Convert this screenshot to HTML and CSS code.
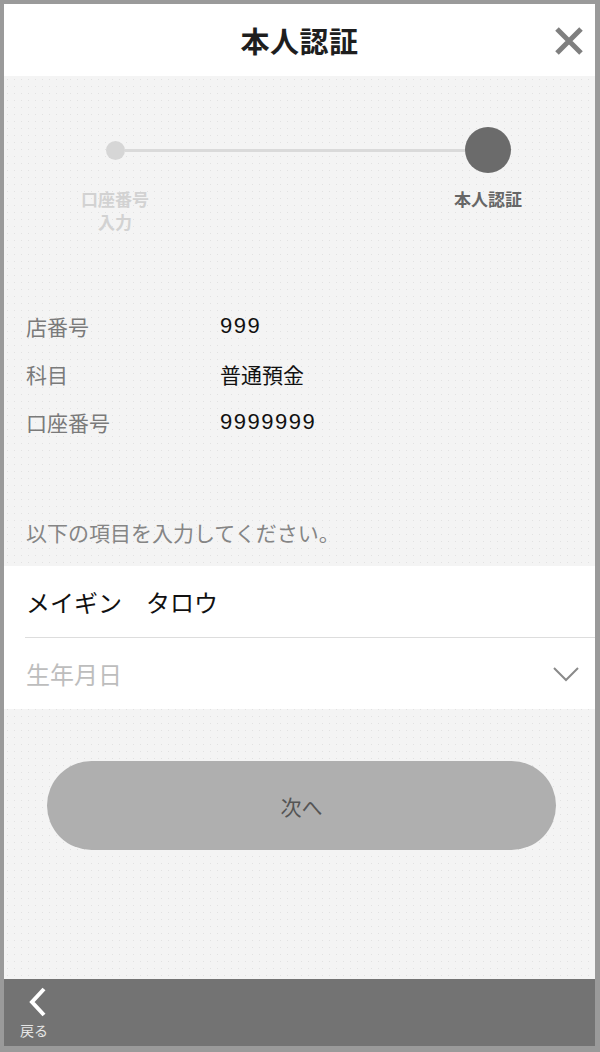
FILE: index.html
```html
<!DOCTYPE html>
<html lang="ja">
<head>
<meta charset="utf-8">
<title>本人認証</title>
<link rel="stylesheet" href="styles.css">
</head>
<body>
<div class="frame">
  <header class="header">
    <div></div>
    <h1 class="title">本人認証</h1>
    <button class="close" aria-label="閉じる">
      <svg width="30" height="30" viewBox="0 0 30 30"><path d="M3 3 L27 27 M27 3 L3 27" stroke="#7f7f7f" stroke-width="5" fill="none"/></svg>
    </button>
  </header>

  <main class="content">
    <div class="stepper">
      <div class="track">
        <span class="dot-small"></span>
        <span class="line"></span>
        <span class="dot-big"></span>
      </div>
      <div class="step-labels">
        <span class="step-label done">口座番号<br>入力</span>
        <span class="step-label current">本人認証</span>
      </div>
    </div>

    <dl class="info">
      <div class="info-row"><dt>店番号</dt><dd class="num">999</dd></div>
      <div class="info-row"><dt>科目</dt><dd>普通預金</dd></div>
      <div class="info-row"><dt>口座番号</dt><dd class="num">9999999</dd></div>
    </dl>

    <p class="intro">以下の項目を入力してください。</p>

    <div class="form">
      <div class="field">メイギン　タロウ</div>
      <div class="field select">
        <span class="placeholder">生年月日</span>
        <svg width="26" height="16" viewBox="0 0 26 16"><polyline points="1,2 13,14 25,2" fill="none" stroke="#8a8a8a" stroke-width="2"/></svg>
      </div>
    </div>

    <div class="actions">
      <button class="next">次へ</button>
    </div>
  </main>

  <footer class="footer">
    <button class="back">
      <svg width="20" height="30" viewBox="0 0 20 30"><polyline points="16,2 4,15 16,28" fill="none" stroke="#ffffff" stroke-width="4"/></svg>
      <span class="back-label">戻る</span>
    </button>
  </footer>
</div>
</body>
</html>
```

FILE: styles.css
```css
* { box-sizing: border-box; }

html, body {
  margin: 0;
  padding: 0;
  background: #9a9a9a;
}

body {
  font-family: "Noto Sans CJK JP", "Noto Sans", sans-serif;
}

.frame {
  width: 600px;
  height: 1052px;
  border-style: solid;
  border-color: #9a9a9a;
  border-width: 4px 5px 6px 4px;
  display: flex;
  flex-direction: column;
  background: #f4f4f4;
}

/* header */
.header {
  height: 72px;
  background: #ffffff;
  display: grid;
  grid-template-columns: 1fr auto 1fr;
  align-items: center;
  flex: none;
}

.title {
  margin: 0;
  font-size: 29px;
  font-weight: 700;
  color: #1e1e1e;
  line-height: 1;
  letter-spacing: 0.5px;
}

.close {
  justify-self: end;
  margin-right: 11px;
  margin-top: 2px;
  padding: 0;
  border: 0;
  background: none;
  width: 30px;
  height: 30px;
  display: flex;
}

/* content */
.content {
  flex: 1;
  background-color: #f4f4f4;
  background-image: radial-gradient(circle, #e2e2e2 0.6px, transparent 1px);
  background-size: 7px 7px;
  display: flex;
  flex-direction: column;
}

.stepper {
  margin-top: 51px;
}

.track {
  display: flex;
  align-items: center;
  height: 46px;
  padding-left: 102px;
  padding-right: 84px;
}

.dot-small {
  width: 19px;
  height: 19px;
  border-radius: 50%;
  background: #d6d6d6;
  flex: none;
}

.line {
  flex: 1;
  height: 3px;
  background: #dadada;
}

.dot-big {
  width: 46px;
  height: 46px;
  border-radius: 50%;
  background: #6b6b6b;
  flex: none;
}

.step-labels {
  display: flex;
  justify-content: space-between;
  padding-left: 61px;
  padding-right: 57px;
  margin-top: 14px;
}

.step-label {
  width: 100px;
  text-align: center;
  font-size: 17px;
  font-weight: 700;
  line-height: 23px;
}

.step-label.done { color: #d2d2d2; }
.step-label.current { color: #666666; }

/* info */
.info {
  margin: 69px 0 0 0;
  padding: 0 0 0 22px;
}

.info-row {
  display: flex;
  height: 48px;
  align-items: center;
}

.info-row dt {
  width: 194px;
  font-size: 21px;
  color: #7a7a7a;
}

.info-row dd {
  margin: 0;
  font-size: 21px;
  color: #111111;
}

.info-row dd.num {
  font-family: "Liberation Sans", sans-serif;
  font-size: 22px;
  letter-spacing: 1.5px;
}

.intro {
  margin: 71px 0 0 22px;
  font-size: 21px;
  line-height: 30px;
  color: #858585;
}

/* form */
.form {
  margin-top: 19px;
  background: #ffffff;
  padding-left: 21px;
}

.field {
  height: 71px;
  display: flex;
  align-items: center;
  padding-left: 1px;
  font-size: 24px;
  color: #111111;
}

.field + .field {
  border-top: 1px solid #dddddd;
  height: 72px;
}

.select {
  justify-content: space-between;
  padding-right: 16px;
}

.placeholder {
  color: #bdbdbd;
}

/* button */
.actions {
  padding: 52px 39px 0 43px;
}

.next {
  width: 100%;
  height: 89px;
  border: 0;
  border-radius: 45px;
  background: #afafaf;
  color: #555555;
  font-family: "Noto Sans CJK JP", sans-serif;
  font-size: 21px;
  padding: 0;
}

/* footer */
.footer {
  height: 67px;
  background: #737373;
  flex: none;
  display: flex;
  align-items: flex-start;
}

.back {
  border: 0;
  background: none;
  padding: 8px 0 0 16px;
  display: flex;
  flex-direction: column;
  align-items: flex-start;
  font-family: "Noto Sans CJK JP", sans-serif;
}

.back svg {
  margin-left: 8px;
  display: block;
}

.back-label {
  margin-top: 4px;
  font-size: 14px;
  line-height: 18px;
  color: #e6e6e6;
}
```
